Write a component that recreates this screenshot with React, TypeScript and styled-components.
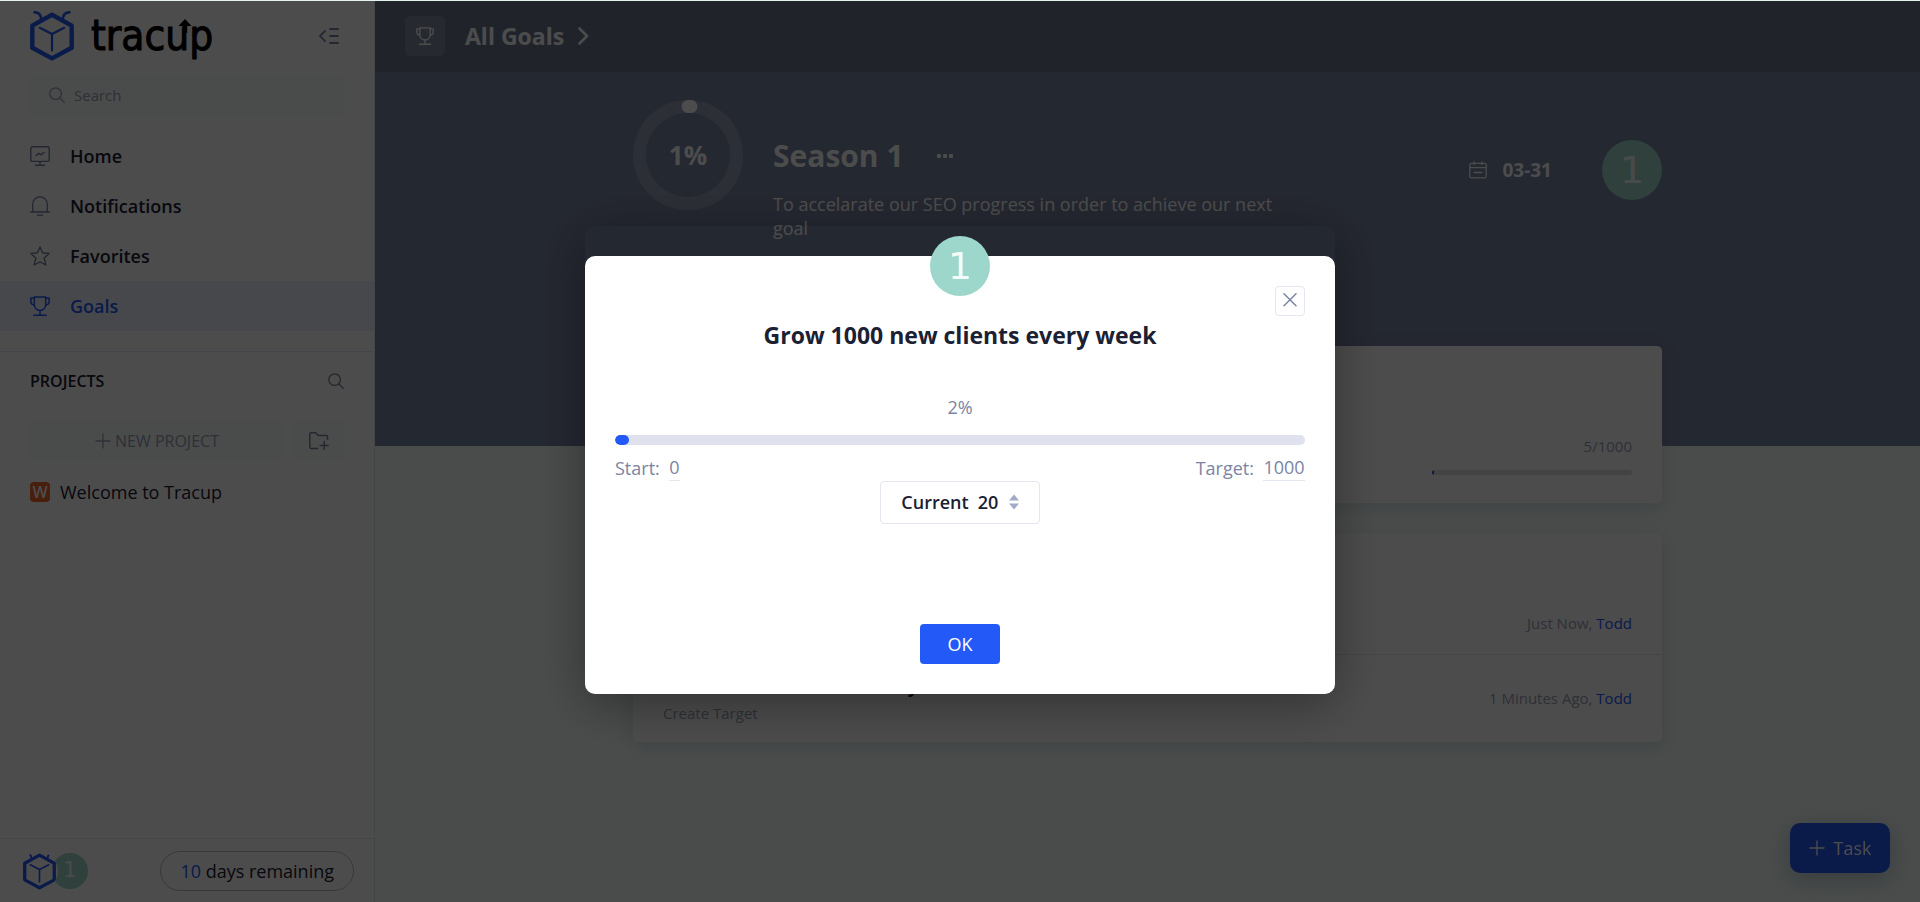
import React from "react";
import styled, { createGlobalStyle } from "styled-components";

const color = {
  ink: "#1b2033",
  muted: "#7b84a3",
  faint: "#9ba1b8",
  line: "#e4e7f0",
  blue: "#235af7",
  mint: "#9dd7cb",
  page: "#f5fffa",
  hero: "#7b85a3",
};

const GlobalStyle = createGlobalStyle`
  *, *::before, *::after { box-sizing: border-box; }
  html, body { margin: 0; padding: 0; }
  body {
    font-family: "Open Sans", "Noto Sans", sans-serif;
    font-size: 18px;
    line-height: 24px;
    color: ${color.ink};
    background: ${color.page};
  }
  button, input { font: inherit; color: inherit; }
  button { border: 0; padding: 0; background: none; cursor: pointer; }
  a { color: inherit; text-decoration: none; }
  h1, h2, h3, p, ul { margin: 0; padding: 0; }
  ul { list-style: none; }
  svg { display: block; flex: none; }
`;

/* ---------- icons ---------- */

const Stroke = styled.svg<{ $w?: number }>`
  fill: none;
  stroke: currentColor;
  stroke-width: ${(p) => p.$w ?? 1.5};
  stroke-linecap: round;
  stroke-linejoin: round;
`;

const LogoMark = ({ width, height }: { width: number; height: number }) => (
  <svg width={width} height={height} viewBox="0 0 44 50" fill="none" stroke={color.blue} strokeLinejoin="round" strokeLinecap="round">
    <path d="M22 3.8 41.7 14.6V36.8L22 47.4 2.3 36.8V14.6Z" strokeWidth="4.4" />
    <path d="M4.5 1.2C8 1.4 10.6 3.4 11 7M39.5 1.2C36 1.4 33.4 3.4 33 7" strokeWidth="2.6" />
    <path d="M9.7 16.8 22 23 34.3 16.8M22 23V39.6" strokeWidth="2.2" />
  </svg>
);

const SearchIcon = () => (
  <Stroke width="16" height="16" viewBox="0 0 16 16" $w={1.3}>
    <circle cx="6.6" cy="6.6" r="5.8" />
    <path d="m11 11 4.2 4.2" />
  </Stroke>
);

const CollapseIcon = () => (
  <Stroke width="20" height="16" viewBox="0 0 20 16" $w={1.8}>
    <path d="M6 3 1 8l5 5.200M11 1h8M11 8h8M11 15h8" />
  </Stroke>
);

const MonitorIcon = () => (
  <Stroke width="20" height="20" viewBox="0 0 20 20" $w={1.4}>
    <rect x=".8" y=".8" width="18.400" height="14.6" rx="1.600" />
    <path d="M10 15.600V19M5.500 19.200h9M6 9.800l2.700-2.600 1.900 1.700L14 6.400" />
  </Stroke>
);

const BellIcon = () => (
  <Stroke width="20" height="20" viewBox="0 0 20 20" $w={1.3}>
    <path d="M2.700 15.700V8.300C2.700 4 5.900.8 10 .8s7.300 3.200 7.300 7.500v7.400M.7 16h18.600M7.300 19.100h5.400" />
  </Stroke>
);

const StarIcon = () => (
  <Stroke width="20" height="20" viewBox="0 0 20 20" $w={1.4}>
    <path d="m10 1 2.500 5.800 6.700.7-5 4.500 1.600 7L10 15.900 4.200 19l1.600-7-5-4.500 6.700-.7Z" />
  </Stroke>
);

const TrophyIcon = ({ size = 20 }: { size?: number }) => (
  <Stroke width={size} height={size} viewBox="0 0 20 20" $w={1.5}>
    <path d="M4.300.9h11.400v7.600c0 3.500-2.400 5.900-5.700 5.900S4.300 12 4.300 8.500ZM4.200 2H.9v3.500c0 1.900 1.300 3.300 3.400 3.600M15.800 2h3.300v3.500c0 1.900-1.300 3.300-3.400 3.600M10 14.500V19M3.800 19.200h12.400" />
  </Stroke>
);

const PlusIcon = () => (
  <Stroke width="16" height="16" viewBox="0 0 16 16" $w={1.3}>
    <path d="M8 1v14M1 8h14" />
  </Stroke>
);

const FolderPlusIcon = () => (
  <Stroke width="20" height="18" viewBox="0 0 20 18" $w={1.5} color={color.muted}>
    <path d="M8.500 16.500H2.200A1.400 1.400 0 0 1 .8 15.100V2.200C.8 1.400 1.400.8 2.200.8h4.600l2.400 2.600h8c.8 0 1.400.6 1.400 1.400v2.400M15.200 9.500v8M11.200 13.500h8" />
  </Stroke>
);

const ChevronIcon = () => (
  <Stroke width="12" height="18" viewBox="0 0 12 18" $w={2.6}>
    <path d="m2.500 1.500 7.500 7.500-7.500 7.500" />
  </Stroke>
);

const CalendarIcon = () => (
  <Stroke width="18" height="18" viewBox="0 0 18 18" $w={1.3}>
    <rect x=".8" y="2.300" width="16.400" height="14.500" rx="1.500" />
    <path d="M.8 6.600h16.400M5 .8v2.800M13 .8v2.800M5 11.500h8" />
  </Stroke>
);

const CloseIcon = () => (
  <Stroke width="14" height="14" viewBox="0 0 14 14" $w={1.5}>
    <path d="m1 .8 12 12M13 .8 1 12.800" />
  </Stroke>
);

/* ---------- shared ---------- */

const Avatar = styled.span<{ $size: number }>`
  display: grid;
  place-items: center;
  flex: none;
  width: ${(p) => p.$size}px;
  height: ${(p) => p.$size}px;
  border-radius: 50%;
  background: ${color.mint};
  color: #f3fbf9;
  font-family: "DejaVu Sans", sans-serif;
  font-size: ${(p) => (p.$size > 40 ? 38 : 21)}px;
  line-height: 1;
`;

const Track = styled.div<{ $height: number }>`
  width: 100%;
  height: ${(p) => p.$height}px;
  border-radius: 5px;
  overflow: hidden;
  background: #dfe2ec;
`;

const Fill = styled.div`
  height: 100%;
  border-radius: inherit;
  background: ${color.blue};
`;

/* ---------- page frame ---------- */

const Page = styled.div`
  display: grid;
  grid-template-columns: 375px minmax(0, 1fr);
  min-height: 100vh;
  border-top: 1px solid #e6f2ee;
`;

const Sidebar = styled.aside`
  display: flex;
  flex-direction: column;
  background: #fff;
  border-right: 1px solid ${color.line};
`;

const Brand = styled.div`
  display: flex;
  align-items: center;
  justify-content: space-between;
  height: 75px;
  padding: 0 35px 5px 30px;
  color: ${color.muted};
`;

const BrandLink = styled.a`
  display: flex;
  align-items: center;
  gap: 17px;
`;

const Wordmark = styled.span`
  position: relative;
  display: block;
  color: #000;
  font-family: "DejaVu Sans Condensed", "DejaVu Sans", sans-serif;
  font-size: 42px;
  line-height: 44px;
  -webkit-text-stroke: 1px #000;
`;

const WordmarkArrow = styled.svg`
  position: absolute;
  left: 87px;
  top: 5px;
`;

const SearchBox = styled.label`
  display: flex;
  align-items: center;
  gap: 9px;
  height: 40px;
  margin: 0 30px 15px;
  padding: 0 19px 2px;
  border-radius: 4px;
  background: ${color.page};
  color: ${color.faint};
`;

const SearchInput = styled.input`
  flex: 1;
  min-width: 0;
  padding: 0;
  border: 0;
  outline: 0;
  background: transparent;
  font-size: 15px;
  &::placeholder { color: ${color.faint}; opacity: 1; }
`;

const NavLink = styled.a<{ $active?: boolean }>`
  display: flex;
  align-items: center;
  gap: 20px;
  height: 50px;
  padding: 0 30px;
  font-weight: 600;
  background: ${(p) => (p.$active ? "#edf0fe" : "transparent")};
  color: ${(p) => (p.$active ? color.blue : color.ink)};
  svg { color: ${(p) => (p.$active ? color.blue : color.muted)}; }
`;

const Projects = styled.section`
  flex: 1;
  margin-top: 20px;
  padding: 17px 30px 0;
  border-top: 1px solid ${color.line};
`;

const ProjectsHead = styled.div`
  display: flex;
  align-items: center;
  justify-content: space-between;
  height: 24px;
  color: ${color.muted};
`;

const ProjectsTitle = styled.h2`
  font-size: 16px;
  font-weight: 600;
  color: ${color.ink};
`;

const ProjectActions = styled.div`
  display: grid;
  grid-template-columns: 1fr 50px;
  gap: 10px;
  margin: 28px 0 19px;
`;

const SoftButton = styled.button`
  display: flex;
  align-items: center;
  justify-content: center;
  gap: 4px;
  height: 40px;
  border-radius: 4px;
  background: ${color.page};
  color: ${color.faint};
  font-size: 16px;
`;

const ProjectLink = styled.a`
  display: flex;
  align-items: center;
  gap: 10px;
`;

const ProjectBadge = styled.span`
  display: grid;
  place-items: center;
  width: 20px;
  height: 20px;
  border-radius: 4px;
  background: #f0672b;
  color: #fff;
  font-size: 16px;
  font-weight: 600;
  line-height: 20px;
`;

const SidebarFoot = styled.footer`
  display: flex;
  align-items: center;
  justify-content: space-between;
  height: 64px;
  padding: 0 20px;
  border-top: 1px solid ${color.line};
`;

const AvatarStack = styled.div`
  display: flex;
  align-items: center;
`;

const TeamAvatar = styled.span`
  position: relative;
  z-index: 1;
  display: grid;
  place-items: center;
  width: 38px;
  height: 38px;
  margin-right: -6px;
  border-radius: 50%;
  overflow: hidden;
  background: #fff;
`;

const TrialPill = styled.button`
  height: 40px;
  padding: 0 19px;
  border: 1px solid #b9bdc9;
  border-radius: 20px;
`;

const Accent = styled.span`
  color: ${color.blue};
`;

/* ---------- main ---------- */

const Main = styled.main`
  display: flex;
  flex-direction: column;
  min-width: 0;
`;

const Hero = styled.section`
  height: 445px;
  background: ${color.hero};
  color: #fff;
`;

const TopBar = styled.header`
  display: flex;
  align-items: center;
  height: 71px;
  padding: 0 30px 2px;
  background: rgba(0, 0, 0, 0.1);
`;

const TopIcon = styled.span`
  display: grid;
  place-items: center;
  width: 40px;
  height: 40px;
  margin-right: 20px;
  border-radius: 6px;
  background: rgba(255, 255, 255, 0.15);
`;

const Crumb = styled.a`
  display: flex;
  align-items: center;
  gap: 13px;
  font-size: 23px;
  font-weight: 700;
`;

const Column = styled.div`
  width: 66.6%;
  margin: 0 auto;
`;

const Season = styled(Column)`
  display: flex;
  align-items: flex-start;
  padding-top: 28px;
`;

const Ring = styled.div`
  display: grid;
  place-items: center;
  width: 110px;
  height: 110px;
  margin-right: 30px;
  > * { grid-area: 1 / 1; }
`;

const RingValue = styled.span`
  font-size: 26px;
  font-weight: 700;
`;

const SeasonText = styled.div`
  width: 520px;
  padding-top: 36px;
`;

const SeasonTitle = styled.h1`
  display: flex;
  align-items: center;
  gap: 32px;
  margin-bottom: 16px;
  font-size: 30px;
  font-weight: 700;
  line-height: 40px;
`;

const SeasonMeta = styled.div`
  display: flex;
  align-items: center;
  gap: 50px;
  margin-left: auto;
  padding-top: 40px;
`;

const DueDate = styled.span`
  display: flex;
  align-items: center;
  gap: 15px;
  font-size: 19px;
  font-weight: 700;
`;

const Cards = styled(Column)`
  display: grid;
  gap: 30px;
  margin-top: -100px;
  padding-bottom: 80px;
`;

const Card = styled.section`
  border-radius: 5px;
  background: #fff;
  color: ${color.faint};
  font-size: 15px;
  box-shadow: 0 5px 20px rgba(60, 70, 120, 0.16);
`;

const TargetRow = styled.div`
  display: flex;
  flex-direction: column;
  align-items: flex-end;
  gap: 12px;
  height: 157px;
  padding: 88px 30px 0;
`;

const MiniTrack = styled.div`
  width: 200px;
`;

const Activity = styled.li<{ $first?: boolean }>`
  display: flex;
  align-items: center;
  justify-content: space-between;
  height: ${(p) => (p.$first ? 121 : 88)}px;
  padding: ${(p) => (p.$first ? "59px 30px 0" : "0 30px 2px")};
  & + & {
    border-top: 1px solid ${color.line};
  }
`;

const ActivityText = styled.div`
  padding-top: 3px;
`;

const ActivityName = styled.h3`
  margin-bottom: 3px;
  color: ${color.ink};
  font-size: 18px;
  font-weight: 700;
`;

const TaskButton = styled.button`
  position: fixed;
  right: 30px;
  bottom: 29px;
  display: flex;
  align-items: center;
  justify-content: center;
  gap: 9px;
  width: 100px;
  height: 50px;
  border-radius: 10px;
  background: ${color.blue};
  color: #fff;
  box-shadow: 0 6px 24px rgba(60, 70, 120, 0.3);
`;

/* ---------- dialog ---------- */

const Overlay = styled.div`
  position: fixed;
  inset: 1px 0 0;
  z-index: 10;
  display: flex;
  justify-content: center;
  align-items: flex-start;
  padding-top: calc(25vh - 1px);
  background: rgba(0, 0, 0, 0.7);
`;

const DialogShell = styled.div`
  position: relative;
  width: 750px;
  padding-top: 30px;
  border-radius: 10px;
  box-shadow: 0 10px 50px rgba(0, 0, 0, 0.36);
`;

const DialogAvatar = styled(Avatar)`
  position: absolute;
  top: 10px;
  left: 50%;
  margin-left: -30px;
`;

const Dialog = styled.div`
  display: flex;
  flex-direction: column;
  padding: 30px;
  border-radius: 10px;
  background: #fff;
  color: ${color.muted};
`;

const CloseButton = styled.button`
  display: grid;
  place-items: center;
  align-self: flex-end;
  width: 30px;
  height: 30px;
  padding-bottom: 2px;
  border: 1px solid ${color.line};
  border-radius: 4px;
`;

const DialogTitle = styled.h2`
  margin: 4px 0 45px;
  color: ${color.ink};
  font-size: 23px;
  font-weight: 700;
  line-height: 30px;
  text-align: center;
`;

const Percent = styled.p`
  margin-bottom: 16px;
  text-align: center;
`;

const Range = styled.div`
  display: flex;
  justify-content: space-between;
  margin-top: 10px;
`;

const RangeField = styled.label`
  display: flex;
  align-items: center;
  gap: 9px;
`;

const RangeInput = styled.input<{ $width: number }>`
  width: ${(p) => p.$width}px;
  height: 26px;
  padding: 0;
  border: 0;
  border-bottom: 1px solid ${color.line};
  outline: 0;
  background: transparent;
  text-align: center;
`;

const Current = styled.label`
  display: flex;
  align-items: center;
  justify-content: center;
  align-self: center;
  width: 160px;
  height: 43px;
  border: 1px solid ${color.line};
  border-radius: 4px;
  color: ${color.ink};
  font-weight: 600;
`;

const CurrentInput = styled.input`
  width: 22px;
  margin: 0 9px;
  padding: 0;
  border: 0;
  outline: 0;
  background: transparent;
`;

const Stepper = styled.span`
  display: grid;
  gap: 2px;
  color: #a2aac6;
`;

const StepButton = styled.button`
  display: block;
  width: 10px;
  height: 7px;
`;

const OkButton = styled.button`
  align-self: center;
  width: 80px;
  height: 40px;
  margin-top: 100px;
  border-radius: 4px;
  background: ${color.blue};
  color: #fff;
`;

const nav = [
  { label: "Home", icon: <MonitorIcon /> },
  { label: "Notifications", icon: <BellIcon /> },
  { label: "Favorites", icon: <StarIcon /> },
  { label: "Goals", icon: <TrophyIcon />, active: true },
];

const goalName = "Grow 1000 new clients every week";

export default function App() {
  const [current, setCurrent] = React.useState(20);
  const start = 0;
  const target = 1000;
  const percent = Math.round(((current - start) / (target - start)) * 100);

  return (
    <>
      <GlobalStyle />
      <Page>
        <Sidebar>
          <Brand>
            <BrandLink href="#" aria-label="tracup">
              <LogoMark width={44} height={50} />
              <Wordmark>
                tracup
                <WordmarkArrow width="14" height="14" viewBox="0 0 14 14">
                  <path d="M7 0 13.500 7H9.200V14H4.800V7H.5Z" fill="#000" />
                </WordmarkArrow>
              </Wordmark>
            </BrandLink>
            <button aria-label="Collapse sidebar">
              <CollapseIcon />
            </button>
          </Brand>
          <SearchBox>
            <SearchIcon />
            <SearchInput placeholder="Search" aria-label="Search" />
          </SearchBox>
          <nav>
            {nav.map((item) => (
              <NavLink key={item.label} href="#" $active={item.active}>
                {item.icon}
                {item.label}
              </NavLink>
            ))}
          </nav>
          <Projects>
            <ProjectsHead>
              <ProjectsTitle>PROJECTS</ProjectsTitle>
              <button aria-label="Search projects">
                <SearchIcon />
              </button>
            </ProjectsHead>
            <ProjectActions>
              <SoftButton>
                <PlusIcon />
                NEW PROJECT
              </SoftButton>
              <SoftButton aria-label="New folder">
                <FolderPlusIcon />
              </SoftButton>
            </ProjectActions>
            <ProjectLink href="#">
              <ProjectBadge>W</ProjectBadge>
              Welcome to Tracup
            </ProjectLink>
          </Projects>
          <SidebarFoot>
            <AvatarStack>
              <TeamAvatar>
                <LogoMark width={33} height={38} />
              </TeamAvatar>
              <Avatar $size={36}>1</Avatar>
            </AvatarStack>
            <TrialPill>
              <Accent>10</Accent> days remaining
            </TrialPill>
          </SidebarFoot>
        </Sidebar>

        <Main>
          <Hero>
            <TopBar>
              <TopIcon>
                <TrophyIcon size={18} />
              </TopIcon>
              <Crumb href="#">
                All Goals
                <ChevronIcon />
              </Crumb>
            </TopBar>
            <Season>
              <Ring>
                <svg width="110" height="110" viewBox="0 0 110 110" fill="none" strokeWidth="13">
                  <circle cx="55" cy="55" r="48.500" stroke="rgba(255,255,255,.2)" />
                  <path d="M55 6.500h3" stroke="#fff" strokeLinecap="round" />
                </svg>
                <RingValue>1%</RingValue>
              </Ring>
              <SeasonText>
                <SeasonTitle>
                  Season 1
                  <button aria-label="More actions">
                    <svg width="18" height="6" viewBox="0 0 18 6" fill="#fff">
                      <rect x="1" y="1" width="4" height="4" rx="1" />
                      <rect x="7" y="1" width="4" height="4" rx="1" />
                      <rect x="13" y="1" width="4" height="4" rx="1" />
                    </svg>
                  </button>
                </SeasonTitle>
                <p>To accelarate our SEO progress in order to achieve our next goal</p>
              </SeasonText>
              <SeasonMeta>
                <DueDate>
                  <CalendarIcon />
                  03-31
                </DueDate>
                <Avatar $size={60}>1</Avatar>
              </SeasonMeta>
            </Season>
          </Hero>

          <Cards>
            <Card>
              <TargetRow>
                <span>5/1000</span>
                <MiniTrack>
                  <Track $height={5}>
                    <Fill style={{ width: "1%" }} />
                  </Track>
                </MiniTrack>
              </TargetRow>
            </Card>
            <Card>
              <ul>
                <Activity $first>
                  <span />
                  <span>
                    Just Now, <Accent>Todd</Accent>
                  </span>
                </Activity>
                <Activity>
                  <ActivityText>
                    <ActivityName>{goalName}</ActivityName>
                    <p>Create Target</p>
                  </ActivityText>
                  <span>
                    1 Minutes Ago, <Accent>Todd</Accent>
                  </span>
                </Activity>
              </ul>
            </Card>
          </Cards>
        </Main>
      </Page>

      <TaskButton>
        <PlusIcon />
        Task
      </TaskButton>

      <Overlay>
        <DialogShell>
          <Dialog role="dialog" aria-modal="true" aria-labelledby="goal-title">
            <CloseButton aria-label="Close">
              <CloseIcon />
            </CloseButton>
            <DialogTitle id="goal-title">{goalName}</DialogTitle>
            <Percent>{percent}%</Percent>
            <Track $height={10} role="progressbar" aria-label="Progress" aria-valuenow={percent} aria-valuemin={0} aria-valuemax={100}>
              <Fill style={{ width: `${percent}%` }} />
            </Track>
            <Range>
              <RangeField>
                Start:
                <RangeInput $width={11} defaultValue={start} />
              </RangeField>
              <RangeField>
                Target:
                <RangeInput $width={42} defaultValue={target} />
              </RangeField>
            </Range>
            <Current>
              Current
              <CurrentInput value={current} onChange={(e) => setCurrent(Number(e.target.value) || 0)} />
              <Stepper>
                <StepButton aria-label="Increase" onClick={() => setCurrent(current + 1)}>
                  <svg width="10" height="7" viewBox="0 0 10 7" fill="currentColor">
                    <path d="M5 .5 10 6.500H0Z" />
                  </svg>
                </StepButton>
                <StepButton aria-label="Decrease" onClick={() => setCurrent(current - 1)}>
                  <svg width="10" height="7" viewBox="0 0 10 7" fill="currentColor">
                    <path d="M5 6.500 0 .5h10Z" />
                  </svg>
                </StepButton>
              </Stepper>
            </Current>
            <OkButton>OK</OkButton>
          </Dialog>
          <DialogAvatar $size={60}>1</DialogAvatar>
        </DialogShell>
      </Overlay>
    </>
  );
}
